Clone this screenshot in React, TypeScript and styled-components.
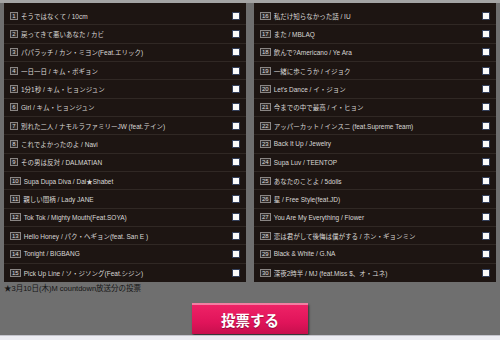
import styled, { createGlobalStyle } from 'styled-components';

const GlobalStyle = createGlobalStyle`
  html, body {
    margin: 0;
    padding: 0;
    background: #6f6f6f;
  }
  body {
    font-family: "Liberation Sans", "Noto Sans CJK JP", sans-serif;
  }
`;

const songs: string[] = [
  'そうではなくて / 10cm',
  '戻ってきて悪いあなた / カビ',
  'パパラッチ / カン・ミヨン(Feat.エリック)',
  '一日一日 / キム・ボギョン',
  '1分1秒 / キム・ヒョンジュン',
  'Girl / キム・ヒョンジュン',
  '別れた二人 / ナモルラファミリーJW (feat.テイン)',
  'これでよかったのよ / Navi',
  'その男は反対 / DALMATIAN',
  'Supa Dupa Diva / Dal★Shabet',
  '親しい間柄 / Lady JANE',
  'Tok Tok / Mighty Mouth(Feat.SOYA)',
  'Hello Honey / パク・ヘギョン(feat. San E )',
  'Tonight / BIGBANG',
  'Pick Up Line / ソ・ジソング(Feat.シジン)',
  '私だけ知らなかった話 / IU',
  'また / MBLAQ',
  '飲んで?Americano / Ye Ara',
  '一緒に歩こうか / イジョク',
  "Let's Dance / イ・ジョン",
  '今までの中で最高 / イ・ヒョン',
  'アッパーカット / インスニ (feat.Supreme Team)',
  'Back It Up / Jewelry',
  'Supa Luv / TEENTOP',
  'あなたのことよ / 5dolls',
  '星 / Free Style(feat.JD)',
  'You Are My Everything / Flower',
  '恋は君がして後悔は僕がする / ホン・ギョンミン',
  'Black & White / G.NA',
  '深夜2時半 / MJ (feat.Miss $、オ・ユネ)',
];

const Page = styled.div`
  width: 500px;
  height: 340px;
  display: flex;
  flex-direction: column;
  overflow: hidden;
  background: #6f6f6f;
`;

const TopStrip = styled.div`
  height: 3px;
  background: #a4a4a4;
`;

const Columns = styled.div`
  display: grid;
  grid-template-columns: 242px 242px;
  gap: 8px;
  padding: 0 4px;
`;

const Panel = styled.div`
  box-sizing: border-box;
  height: 279px;
  padding-top: 4px;
  background: #1d1512;
  display: grid;
  grid-template-rows: repeat(15, 1fr);
`;

const Row = styled.div`
  display: flex;
  align-items: center;
  padding: 0 6px;
  border-bottom: 1px solid #302824;
  &:last-child {
    border-bottom: none;
  }
`;

const Badge = styled.span`
  box-sizing: border-box;
  min-width: 8px;
  height: 8px;
  padding: 0 1px;
  border: 1px solid #8a8684;
  background: #2e2826;
  color: #dcdcdc;
  font-size: 6px;
  line-height: 6px;
  text-align: center;
`;

const Title = styled.span`
  margin-left: 3px;
  color: #dad8d6;
  font-size: 6.5px;
  white-space: nowrap;
`;

const Check = styled.span`
  margin-left: auto;
  box-sizing: border-box;
  width: 8px;
  height: 8px;
  background: #fbfbfb;
  border: 1px solid #34405a;
`;

const Note = styled.div`
  padding: 2px 4px 0;
  height: 10px;
  color: #151515;
  font-size: 7.5px;
  line-height: 10px;
`;

const ButtonRow = styled.div`
  display: flex;
  justify-content: center;
  padding-top: 9px;
`;

const VoteButton = styled.button`
  width: 116px;
  height: 31px;
  padding: 0;
  border: none;
  border-top: 2px solid #f27ea2;
  background: linear-gradient(#ee2266, #e0145a 60%, #c70f4d);
  box-shadow: 1px 2px 2px rgba(0, 0, 0, 0.55);
  color: #ffffff;
  font-family: "Noto Sans CJK JP", sans-serif;
  font-size: 14.5px;
  font-weight: 700;
  text-shadow: 0 1px 1px rgba(0, 0, 0, 0.35);
`;

const BottomStrip = styled.div`
  margin-top: auto;
  height: 4px;
  background: #ececf2;
  border-top: 1px solid #c4c4cc;
`;

const SongPanel = ({ start }: { start: number }) => (
  <Panel>
    {songs.slice(start, start + 15).map((title, i) => (
      <Row key={title}>
        <Badge>{start + i + 1}</Badge>
        <Title>{title}</Title>
        <Check />
      </Row>
    ))}
  </Panel>
);

const App = () => (
  <Page>
    <GlobalStyle />
    <TopStrip />
    <Columns>
      <SongPanel start={0} />
      <SongPanel start={15} />
    </Columns>
    <Note>★3月10日(木)M countdown放送分の投票</Note>
    <ButtonRow>
      <VoteButton>投票する</VoteButton>
    </ButtonRow>
    <BottomStrip />
  </Page>
);

export default App;
